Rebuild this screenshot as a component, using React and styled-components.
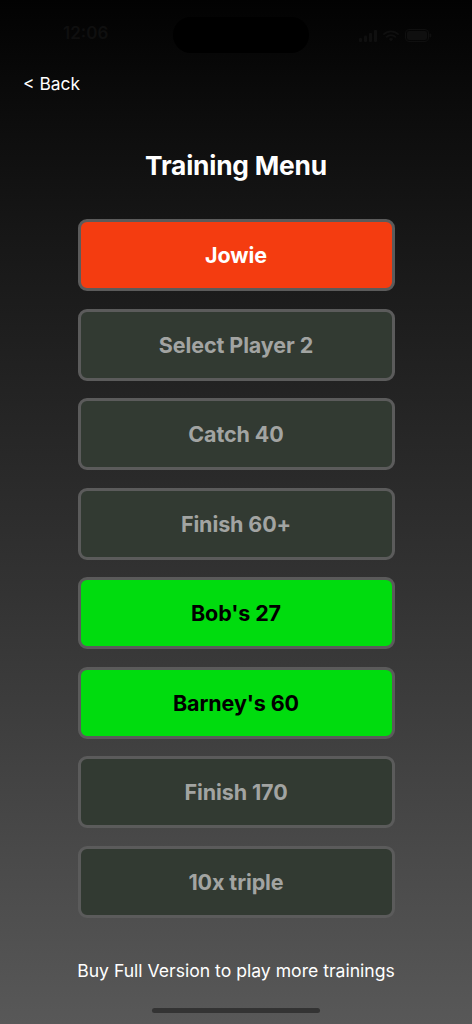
import styled, { createGlobalStyle } from "styled-components";

const GlobalStyle = createGlobalStyle`
  html, body {
    margin: 0;
    padding: 0;
    background: #000;
  }
  * {
    box-sizing: border-box;
  }
`;

const trainings = [
  { label: "Jowie", variant: "player" },
  { label: "Select Player 2", variant: "locked" },
  { label: "Catch 40", variant: "locked" },
  { label: "Finish 60+", variant: "locked" },
  { label: "Bob's 27", variant: "free" },
  { label: "Barney's 60", variant: "free" },
  { label: "Finish 170", variant: "locked" },
  { label: "10x triple", variant: "locked" },
];

const variants = {
  player: { bg: "#f43c10", color: "#ffffff" },
  locked: { bg: "#323a32", color: "#a2a4a2" },
  free: { bg: "#00dc0e", color: "#000000" },
};

// status bar glyphs are almost black on black
const dim = "#0f0f0f";

const App = () => {
  return (
    <>
      <GlobalStyle />
      <Screen>
        <StatusBar>
          <Clock>12:06</Clock>
          <Island />
          <StatusIcons>
            <svg width="18" height="12" viewBox="0 0 18 12">
              <rect x="0" y="8" width="3" height="4" rx="1" fill={dim} />
              <rect x="5" y="5.5" width="3" height="6.5" rx="1" fill={dim} />
              <rect x="10" y="3" width="3" height="9" rx="1" fill={dim} />
              <rect x="15" y="0" width="3" height="12" rx="1" fill={dim} />
            </svg>
            <svg width="16" height="12" viewBox="0 0 16 12">
              <path d="M8 11.5 L10.3 9 A3.4 3.4 0 0 0 5.7 9 Z" fill={dim} />
              <path d="M3.6 6.9 A6.4 6.4 0 0 1 12.4 6.9" stroke={dim} strokeWidth="1.8" fill="none" strokeLinecap="round" />
              <path d="M1 4.2 A10 10 0 0 1 15 4.2" stroke={dim} strokeWidth="1.8" fill="none" strokeLinecap="round" />
            </svg>
            <svg width="27" height="13" viewBox="0 0 27 13">
              <rect x="0.5" y="0.5" width="23" height="12" rx="3.5" stroke={dim} fill="none" />
              <rect x="2" y="2" width="20" height="9" rx="2" fill={dim} />
              <rect x="24.5" y="4.5" width="1.8" height="4" rx="0.9" fill={dim} />
            </svg>
          </StatusIcons>
        </StatusBar>

        <BackLink>&lt; Back</BackLink>

        <Title>Training Menu</Title>

        <MenuList>
          {trainings.map(({ label, variant }) => (
            <MenuButton key={label} $variant={variant}>
              {label}
            </MenuButton>
          ))}
        </MenuList>

        <Footer>Buy Full Version to play more trainings</Footer>
        <HomeIndicator />
      </Screen>
    </>
  );
};

const Screen = styled.div`
  width: 472px;
  min-height: 1024px;
  display: flex;
  flex-direction: column;
  align-items: center;
  background: linear-gradient(180deg, #020202 0%, #161616 22%, #333333 58%, #585858 100%);
  font-family: Inter, "Noto Sans", "Liberation Sans", sans-serif;
  color: #ffffff;
`;

const StatusBar = styled.div`
  width: 100%;
  height: 54px;
  padding: 17px 40px 0 63px;
  display: flex;
  justify-content: space-between;
  align-items: flex-start;
`;

const Clock = styled.span`
  width: 60px;
  margin-top: 6px;
  font-size: 17px;
  font-weight: 600;
  color: ${dim};
`;

const Island = styled.div`
  width: 136px;
  height: 36px;
  border-radius: 18px;
  background: #000;
`;

const StatusIcons = styled.div`
  display: flex;
  align-items: center;
  gap: 6px;
  margin-top: 12px;
`;

const BackLink = styled.a`
  align-self: flex-start;
  margin: 19px 0 0 23px;
  font-size: 17.4px;
  line-height: 22px;
  color: #ffffff;
  cursor: pointer;
`;

const Title = styled.h1`
  margin: 55px 0 0;
  font-size: 26.3px;
  line-height: 32px;
  font-weight: 700;
  letter-spacing: -0.2px;
`;

const MenuList = styled.div`
  margin-top: 37px;
  display: flex;
  flex-direction: column;
  gap: 17.5px;
`;

const MenuButton = styled.button`
  width: 317px;
  height: 72px;
  border: 3px solid #5b5b5b;
  border-radius: 9px;
  background: ${({ $variant }) => variants[$variant].bg};
  color: ${({ $variant }) => variants[$variant].color};
  font-family: inherit;
  font-size: 21.5px;
  font-weight: 700;
  letter-spacing: -0.1px;
  cursor: pointer;
`;

const Footer = styled.p`
  margin: 42px 0 0;
  font-size: 17.6px;
  line-height: 22px;
  color: #ffffff;
`;

const HomeIndicator = styled.div`
  margin-top: 26px;
  width: 168px;
  height: 5px;
  border-radius: 3px;
  background: #333333;
`;

export default App;
